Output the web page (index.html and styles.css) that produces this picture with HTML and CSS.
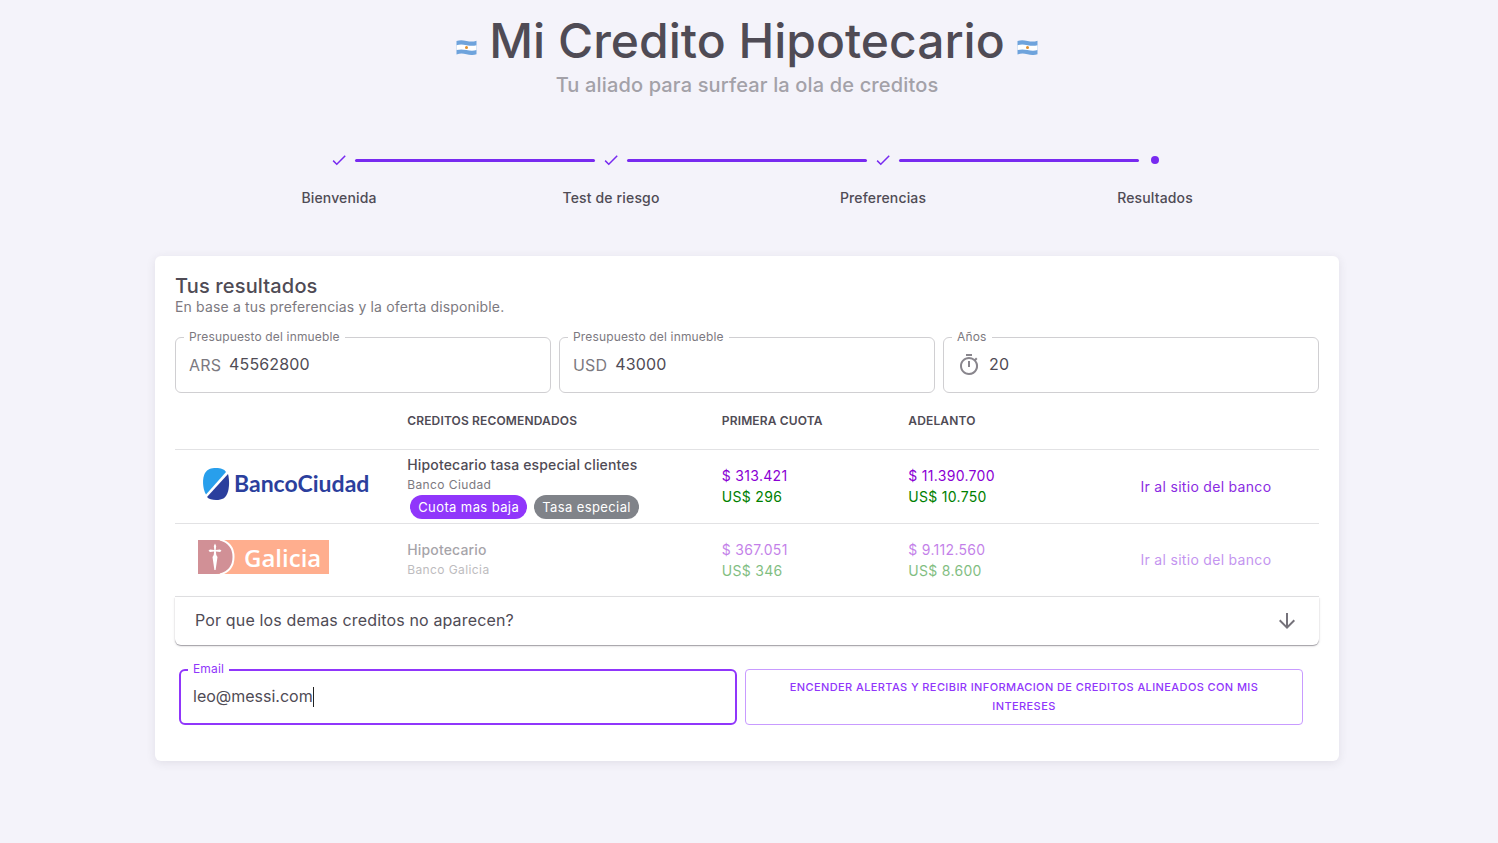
FILE: index.html
```
<!DOCTYPE html>
<html lang="es">
<head>
<meta charset="utf-8">
<meta name="viewport" content="width=device-width, initial-scale=1">
<title>Mi Credito Hipotecario</title>
<link rel="stylesheet" href="styles.css">
</head>
<body>
<svg class="defs" width="0" height="0" aria-hidden="true">
  <symbol id="flag" viewBox="0 0 20 15">
    <path d="M0 1C3.500-.2 6 0 10 .9s6.500 1 10-.2v13.600c-3.500 1-6 .9-10 0s-6.500-1-10 .3z" fill="#6ea3dc"/>
    <path d="M0 5.300c3.500-1 6-.8 10-.1s6.500.9 10 0v4.800c-3.500 1-6 .8-10 0s-6.500-.9-10 .1z" fill="#fff"/>
    <circle cx="10" cy="7.500" r="1.500" fill="#e08f2c"/>
  </symbol>
  <symbol id="check" viewBox="0 0 24 24"><path d="M21 7 9 19l-5.500-5.500 1.410-1.410L9 16.170 19.590 5.590z" fill="currentColor"/></symbol>
</svg>
<main class="page">
  <header class="hero">
    <div class="hero-row">
      <svg class="flag" aria-hidden="true"><use href="#flag"/></svg>
      <h1>Mi Credito Hipotecario</h1>
      <svg class="flag" aria-hidden="true"><use href="#flag"/></svg>
    </div>
    <p class="tagline">Tu aliado para surfear la ola de creditos</p>
  </header>

  <ol class="stepper">
    <li class="step"><div class="track"><span></span><svg class="tick"><use href="#check"/></svg><span class="bar bar-right"></span></div>Bienvenida</li>
    <li class="step"><div class="track"><span class="bar bar-left"></span><svg class="tick"><use href="#check"/></svg><span class="bar bar-right"></span></div>Test de riesgo</li>
    <li class="step"><div class="track"><span class="bar bar-left"></span><svg class="tick"><use href="#check"/></svg><span class="bar bar-right"></span></div>Preferencias</li>
    <li class="step" aria-current="step"><div class="track"><span class="bar bar-left"></span><span class="dot"></span><span></span></div>Resultados</li>
  </ol>

  <section class="card">
    <h2>Tus resultados</h2>
    <p class="lead">En base a tus preferencias y la oferta disponible.</p>

    <div class="filters">
      <div class="field"><label for="ars">Presupuesto del inmueble</label><span class="unit">ARS</span><input id="ars" type="text" value="45562800"></div>
      <div class="field"><label for="usd">Presupuesto del inmueble</label><span class="unit">USD</span><input id="usd" type="text" value="43000"></div>
      <div class="field"><label for="years">Años</label>
        <svg class="timer" viewBox="0 0 24 24" aria-hidden="true"><path fill="currentColor" d="M15 1H9v2h6V1zm-4 13h2V8h-2v6zm8.030-6.610 1.420-1.420c-.43-.51-.9-.99-1.410-1.410l-1.420 1.420A8.962 8.962 0 0 0 12 4c-4.970 0-9 4.030-9 9s4.020 9 9 9a8.994 8.994 0 0 0 7.030-14.610zM12 20c-3.870 0-7-3.130-7-7s3.130-7 7-7 7 3.130 7 7-3.130 7-7 7z"/></svg>
        <input id="years" type="text" value="20"></div>
    </div>

    <table class="credits">
      <colgroup><col class="c-logo"><col class="c-name"><col class="c-fee"><col class="c-advance"><col></colgroup>
      <thead>
        <tr><td></td><th scope="col">Creditos recomendados</th><th scope="col">Primera cuota</th><th scope="col">Adelanto</th><td></td></tr>
      </thead>
      <tbody>
        <tr>
          <td>
            <svg class="logo" width="200" height="40" viewBox="0 0 200 40" role="img" aria-label="Banco Ciudad">
              <path d="M31 30.500C27.500 25 27 14 30 9c2.500-4 6-5 11-5 5 0 8 1 10 4z" fill="#289fec"/>
              <path d="M53 10c1.500 5 1.500 14-.5 19-2 5-5 7-11.500 7-4 0-7-.8-9-3z" fill="#2b3f9d"/>
              <text x="59" y="28" class="ciudad">BancoCiudad</text>
            </svg>
          </td>
          <td><div class="name">Hipotecario tasa especial clientes</div><div class="bank">Banco Ciudad</div>
            <div class="chips"><span class="chip chip-primary">Cuota mas baja</span><span class="chip">Tasa especial</span></div></td>
          <td><div class="ars">$ 313.421</div><div class="usd">US$ 296</div></td>
          <td><div class="ars">$ 11.390.700</div><div class="usd">US$ 10.750</div></td>
          <td><a href="#">Ir al sitio del banco</a></td>
        </tr>
        <tr class="muted">
          <td>
            <svg class="logo" width="200" height="40" viewBox="0 0 200 40" role="img" aria-label="Galicia">
              <path d="M23 3h131v34H23z" fill="#ff5f1f"/>
              <path d="M23 3h17c12 0 19 7 19 17s-7 17-19 17H23z" fill="#a4232f"/>
              <path d="M45 2.500C54 5 58.500 11 58.500 20S54 35 45 37.500" fill="none" stroke="#fff" stroke-width="2"/>
              <path d="M39.300 13 38.800 9 40 6.500 41.200 9 40.700 13 45 12.400 46.500 13.700 45 15 40.900 14.500 41.300 18 42.500 20 40.600 33H39.400L37.500 20 38.700 18 39.100 14.500 35 15 33.500 13.700 35 12.400z" fill="#fff"/>
              <text x="69" y="30" class="galicia">Galicia</text>
            </svg>
          </td>
          <td><div class="name">Hipotecario</div><div class="bank">Banco Galicia</div></td>
          <td><div class="ars">$ 367.051</div><div class="usd">US$ 346</div></td>
          <td><div class="ars">$ 9.112.560</div><div class="usd">US$ 8.600</div></td>
          <td><a href="#">Ir al sitio del banco</a></td>
        </tr>
      </tbody>
    </table>

    <button class="accordion" type="button" aria-expanded="false">Por que los demas creditos no aparecen?
      <svg class="arrow" viewBox="0 0 24 24" aria-hidden="true"><path fill="currentColor" d="m20 12-1.410-1.410L13 16.170V4h-2v12.170l-5.580-5.590L4 12l8 8 8-8z"/></svg>
    </button>

    <form class="alerts">
      <div class="field field-active"><label for="email">Email</label><input id="email" type="text" inputmode="email" value="leo@messi.com"><span class="caret"></span></div>
      <button class="outlined" type="button">Encender alertas y recibir informacion de creditos alineados con mis intereses</button>
    </form>
  </section>
</main>
</body>
</html>
```
FILE: styles.css
```
:root {
  --ink: #4f4b55;
  --soft: #7c7980;
  --primary: #9036fb;
  --line: #e2e2e4;
}
* { box-sizing: border-box; }
body {
  margin: 0;
  min-height: 100vh;
  background: #f4f3fa;
  color: var(--ink);
  font: 400 14px/21px Inter, "Liberation Sans", sans-serif;
  letter-spacing: 0.15px;
}
h1, h2, p, ol { margin: 0; padding: 0; }
button, input { font: inherit; letter-spacing: inherit; color: inherit; }
.defs { position: absolute; }
.page { padding: 12px 4px 0 0; }

.hero { text-align: center; }
.hero-row { display: flex; justify-content: center; align-items: center; gap: 12px; }
.flag { width: 21px; height: 15px; margin-top: 13px; }
h1 { font-size: 48px; line-height: 58px; font-weight: 500; letter-spacing: 0; }
.tagline { font-size: 20px; line-height: 30px; font-weight: 500; color: #a3a1a8; }

.stepper { display: flex; max-width: 1088px; margin: 48px auto 0; list-style: none; }
.step { flex: 1; text-align: center; font-weight: 500; }
.track { display: grid; grid-template-columns: 1fr 16px 1fr; align-items: center; height: 24px; margin-bottom: 15px; }
.bar { height: 3px; background: #782af0; }
.bar-right { margin-left: 8px; border-radius: 3px 0 0 3px; }
.bar-left { margin-right: 8px; border-radius: 0 3px 3px 0; }
.tick { width: 18px; height: 18px; margin-left: -1px; color: #782af0; }
.dot { width: 8px; height: 8px; margin: auto; border-radius: 50%; background: #782af0; }

.card {
  max-width: 1184px;
  margin: 48px auto 0;
  padding: 20px 20px 36px;
  border-radius: 6px;
  background: #fff;
  box-shadow: 0 2px 10px rgba(58, 53, 65, 0.1);
}
h2 { font-size: 20px; line-height: 20px; font-weight: 500; }
.lead { color: var(--soft); }

.filters { display: grid; grid-template-columns: repeat(3, 1fr); gap: 8px; margin-top: 20px; }
.field {
  position: relative;
  display: flex;
  align-items: center;
  gap: 8px;
  height: 56px;
  padding: 0 13px;
  border: 1px solid #d0cfd2;
  border-radius: 6px;
  font-size: 16px;
}
.field label {
  position: absolute;
  top: -10px;
  left: 8px;
  padding: 0 5px;
  background: #fff;
  color: var(--soft);
  font-size: 12px;
  line-height: 18px;
}
.field input { flex: 1; min-width: 0; padding: 0 0 1px; border: 0; outline: 0; background: none; }
.unit { color: var(--soft); }
.timer { width: 24px; height: 24px; color: #89868d; }

.credits { width: 100%; table-layout: fixed; border-collapse: collapse; }
.c-logo, .c-advance { width: 20.3%; }
.c-name { width: 27.5%; }
.c-fee { width: 16.3%; }
.credits th, .credits td { padding: 0; text-align: left; border-bottom: 1px solid var(--line); }
.credits th { height: 56px; font-size: 12px; font-weight: 600; text-transform: uppercase; }
.credits tbody td { height: 74px; }
.credits tbody .muted td { height: 73px; }
.logo { display: block; margin-top: -5px; }
.ciudad { font: 700 23px Lato, sans-serif; letter-spacing: 0; fill: #2b3f9d; }
.galicia { font: 600 24px "Open Sans", sans-serif; letter-spacing: 0; fill: #fff; }
.name { font-weight: 500; }
.bank { color: var(--soft); font-size: 12px; line-height: 20px; letter-spacing: 0.4px; }
.chips { display: flex; gap: 7px; padding-left: 3px; letter-spacing: 0.4px; }
.chip { padding: 0 8px; border-radius: 12px; background: #808389; color: #fff; font-size: 13px; line-height: 24px; }
.chip-primary { background: var(--primary); }
.ars, .usd, .credits a { letter-spacing: 0.3px; }
.ars { color: #8a00d4; }
.usd { color: #008000; }
.credits a { color: #8a2be2; text-decoration: none; }
.muted td > * { opacity: 0.5; }

.accordion {
  display: flex;
  justify-content: space-between;
  align-items: center;
  width: 100%;
  height: 48px;
  padding: 0 20px;
  border: 0;
  border-radius: 0 0 6px 6px;
  background: #fff;
  box-shadow: 0 1px 1px rgba(58, 53, 65, 0.4), 0 1px 3px rgba(58, 53, 65, 0.15);
  font-size: 16px;
}
.arrow { width: 24px; height: 24px; color: #75727a; }

.alerts { display: grid; grid-template-columns: 1fr 1fr; gap: 8px; margin-top: 24px; padding: 0 16px 0 4px; }
.field-active { gap: 0; padding: 0 12px; border: 2px solid var(--primary); }
.field-active label { top: -11px; left: 7px; color: var(--primary); }
.field-active input { flex: none; field-sizing: content; letter-spacing: 0; }
.caret { width: 1px; height: 20px; background: #222; }
.outlined {
  padding: 8px 40px;
  border: 1px solid #c89bff;
  border-radius: 4px;
  background: #fff;
  color: var(--primary);
  font-size: 11px;
  line-height: 19px;
  font-weight: 500;
  letter-spacing: 0.4px;
  text-transform: uppercase;
}
```
